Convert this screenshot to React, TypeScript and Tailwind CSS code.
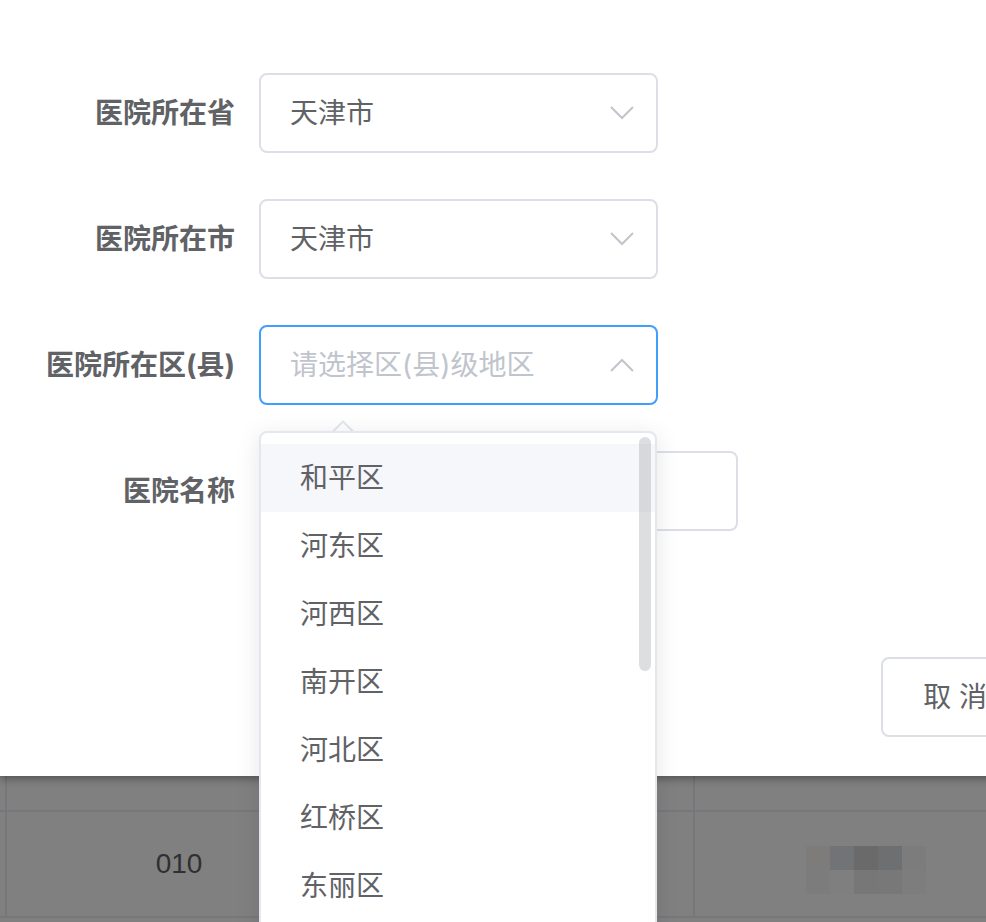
import React from "react"

const FONT = "font-['Inter','Noto_Sans_CJK_SC',sans-serif]"

const districts = ["和平区", "河东区", "河西区", "南开区", "河北区", "红桥区", "东丽区", "西青区"]

// mosaic blocks over the blurred cell
const mosaic = [
  ["#7e7c7a", "#727376", "#6a6a6a", "#6e6f71", "#7c7c7c"],
  ["#7c7c7c", "#7f7f7f", "#777777", "#787878", "#7d7d7d"],
]

function Chevron({ up }: { up?: boolean }) {
  return (
    <svg width="24" height="14" viewBox="0 0 24 14" className="shrink-0">
      <polyline
        points={up ? "1,13 12,2 23,13" : "1,1 12,12 23,1"}
        fill="none"
        stroke="#c0c4cc"
        strokeWidth="2"
      />
    </svg>
  )
}

function FormRow({
  label,
  value,
  placeholder,
  focused,
  up,
  wide,
}: {
  label: string
  value?: string
  placeholder?: string
  focused?: boolean
  up?: boolean
  wide?: boolean
}) {
  return (
    <div className="flex items-center h-[80px]">
      <div className="w-[235px] text-right text-[28px] font-bold text-[#606266] leading-none">{label}</div>
      <div
        className={`ml-[24px] h-[80px] ${wide ? "w-[479px]" : "w-[399px]"} rounded-[8px] border-2 ${
          focused ? "border-[#409eff]" : "border-[#dcdfe6]"
        } bg-white flex items-center pl-[29px] pr-[22px]`}
      >
        <span className={`flex-1 text-[28px] leading-none ${value ? "text-[#606266]" : "text-[#c0c4cc]"}`}>
          {value ?? placeholder}
        </span>
        {!wide && <Chevron up={up} />}
      </div>
    </div>
  )
}

export default function App() {
  return (
    <div className={`relative w-[986px] h-[922px] overflow-hidden bg-[#808080] ${FONT}`}>
      {/* Dialog */}
      <div className="relative z-10 w-[1214px] h-[776px] bg-white shadow-[0_3px_8px_rgba(0,0,0,0.35)] pt-[73px] flex flex-col">
        <div className="flex flex-col gap-[46px]">
          <FormRow label="医院所在省" value="天津市" />
          <FormRow label="医院所在市" value="天津市" />
          <FormRow label="医院所在区(县)" placeholder="请选择区(县)级地区" focused up />
          <FormRow label="医院名称" wide />
        </div>
        <div className="mt-[126px] flex justify-end gap-[20px] pr-[17px]">
          <button className="h-[80px] px-[40px] rounded-[8px] border-2 border-[#dcdfe6] bg-white text-[28px] text-[#606266] leading-none">
            取 消
          </button>
          <button className="h-[80px] px-[40px] rounded-[8px] border-2 border-[#409eff] bg-[#409eff] text-[28px] text-white leading-none">
            确 定
          </button>
        </div>
      </div>

      {/* Dimmed table behind the dialog */}
      <div className="font-['Liberation_Sans',sans-serif]">
        <div className="grid grid-cols-[7px_344px_344px_1fr] h-[36px] border-b-2 border-[#76777a]">
          <div className="border-r-2 border-[#76777a]" />
          <div />
          <div className="border-r-2 border-[#76777a]" />
          <div />
        </div>
        <div className="grid grid-cols-[7px_344px_344px_1fr] h-[106px] border-b-2 border-[#76777a]">
          <div className="border-r-2 border-[#76777a]" />
          <div className="flex items-center justify-center text-[28px] text-[#2f3032]">010</div>
          <div className="border-r-2 border-[#76777a]" />
          <div className="pl-[111px] pt-[34px]">
            {mosaic.map((row, r) => (
              <div key={r} className="flex">
                {row.map((c, i) => (
                  <div key={i} className="w-[24px] h-[24px]" style={{ background: c }} />
                ))}
              </div>
            ))}
          </div>
        </div>
      </div>

      {/* Select dropdown popper */}
      <div className="absolute z-20 left-[259px] top-[431px] w-[398px] h-[560px]">
        <div className="absolute left-[72px] -top-[11px] w-0 h-0 border-x-[12px] border-x-transparent border-b-[12px] border-b-[#e4e7ed]" />
        <div className="absolute left-[74px] -top-[8px] w-0 h-0 border-x-[10px] border-x-transparent border-b-[10px] border-b-white" />
        <div className="relative h-full rounded-[8px] border-2 border-[#e4e7ed] bg-white shadow-[0_4px_24px_rgba(0,0,0,0.1)] pt-[11px] overflow-hidden">
          {districts.map((d, i) => (
            <div
              key={d}
              className={`h-[68px] flex items-center pl-[39px] text-[28px] text-[#606266] leading-none ${
                i === 0 ? "bg-[#f5f7fa]" : ""
              }`}
            >
              {d}
            </div>
          ))}
          <div className="absolute right-[4px] top-[4px] w-[12px] h-[234px] rounded-full bg-[rgba(144,147,153,0.3)]" />
        </div>
      </div>
    </div>
  )
}
